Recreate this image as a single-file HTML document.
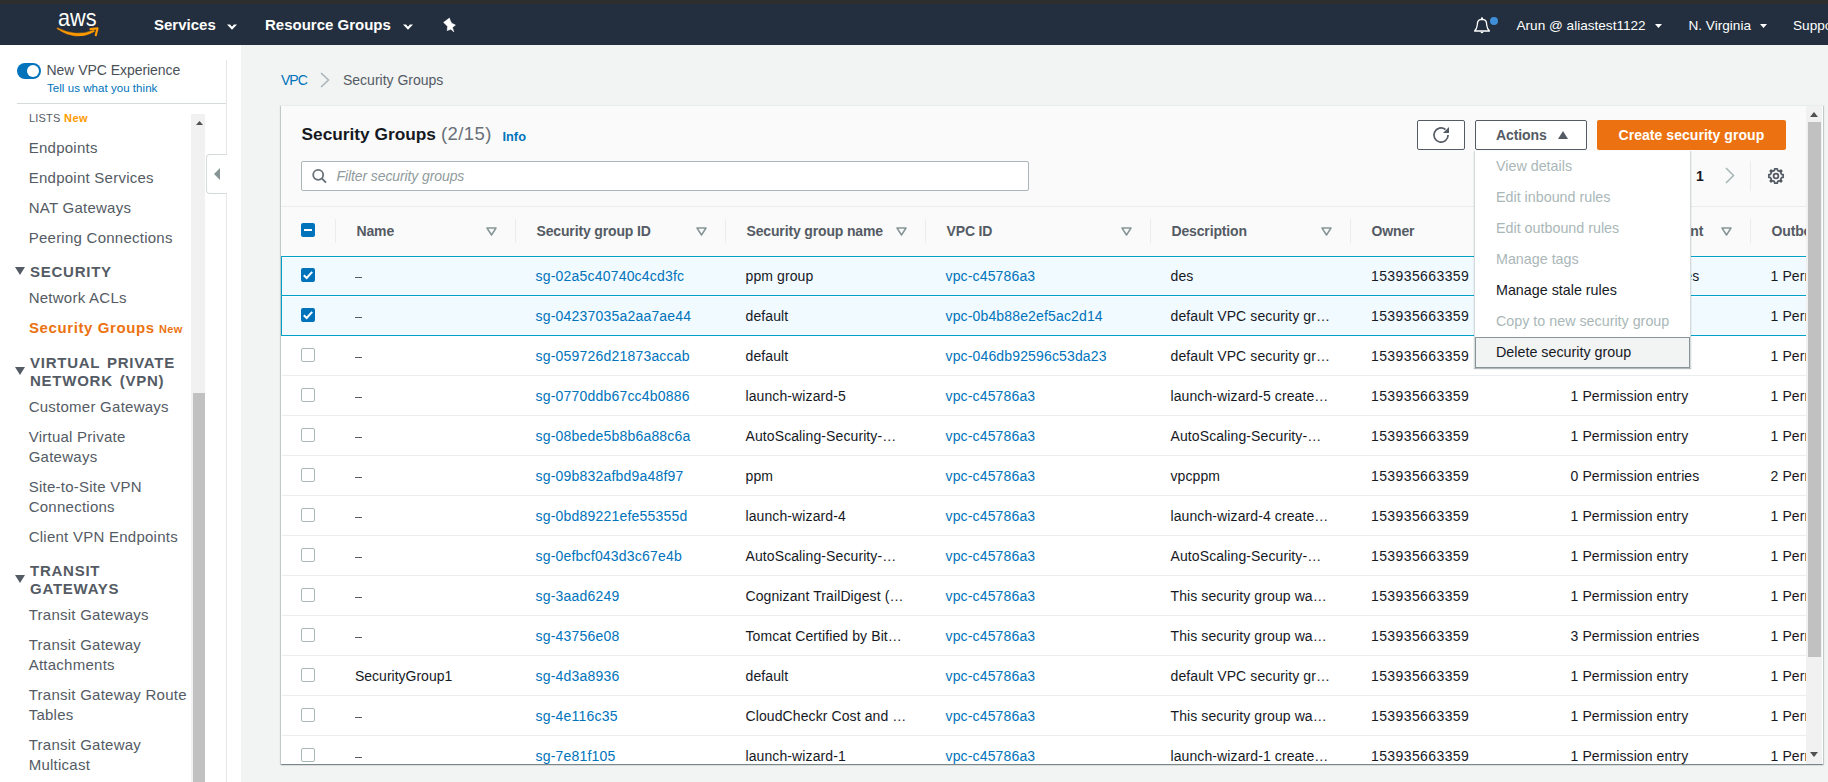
<!DOCTYPE html><html><head><meta charset="utf-8"><style>
*{box-sizing:border-box;margin:0;padding:0}
html,body{width:1828px;height:782px;overflow:hidden;background:#f2f3f3;font-family:"Liberation Sans",sans-serif;}
.t{position:absolute;line-height:1;white-space:nowrap}
.r{position:absolute}
svg{position:absolute;overflow:visible}
</style></head><body>
<div class="r" style="left:0px;top:0px;width:1828px;height:4px;background:#2e2e2e"></div>
<div class="r" style="left:0px;top:4px;width:1828px;height:41px;background:#232f3e"></div>
<svg style="left:0;top:0" width="120" height="45" viewBox="0 0 120 45">
<text x="58" y="25.5" font-family="Liberation Sans" font-size="24" fill="#fff" textLength="38.5" lengthAdjust="spacingAndGlyphs">aws</text>
<path d="M56.8 28.6 Q76 42 94.5 31.4 L93.8 30.2 Q76 37.5 57.6 27.9 Z" fill="#ff9900" stroke="#ff9900" stroke-width="0.5" stroke-linejoin="round"/>
<path d="M90.5 29.2 L97.5 28.3 L95.8 35.2" stroke="#ff9900" stroke-width="2.2" fill="none" stroke-linecap="round" stroke-linejoin="round"/>
</svg>
<div class="t" style="left:154px;top:17.30px;font-size:15px;color:#fff;font-weight:bold;">Services</div>
<div class="t" style="left:265px;top:17.30px;font-size:15px;color:#fff;font-weight:bold;">Resource Groups</div>
<svg style="left:227px;top:23.5px" width="10" height="7" viewBox="0 0 10 7"><path d="M0 0.6 L3.1 0.6 L5 2.7 L6.9 0.6 L10 0.6 L5 5.8 Z" fill="#fff"/></svg>
<svg style="left:403px;top:23.5px" width="10" height="7" viewBox="0 0 10 7"><path d="M0 0.6 L3.1 0.6 L5 2.7 L6.9 0.6 L10 0.6 L5 5.8 Z" fill="#fff"/></svg>
<svg style="left:436px;top:12px" width="26" height="26" viewBox="0 0 26 26">
<path d="M7.6 10.4 L13.4 6.1 L14.2 8.4 L15.6 11.2 L19.4 13.1 L16.4 15.4 L17.8 19.8 L14.8 17.2 L11.2 18.6 L11.6 14.4 L9.8 12.4 Z" fill="#fff" stroke="#fff" stroke-width="0.6" stroke-linejoin="round"/>
</svg>
<svg style="left:1472px;top:16px" width="28" height="20" viewBox="0 0 28 20">
<path d="M2.6 15 Q4.9 12.6 5.3 9 L5.5 6.8 Q5.9 3.4 10 3.3 Q14.1 3.4 14.5 6.8 L14.7 9 Q15.1 12.6 17.4 15 Z" stroke="#fff" stroke-width="1.3" fill="none" stroke-linejoin="round"/>
<circle cx="10" cy="2.3" r="1.1" fill="#fff"/>
<path d="M8.3 15.8 Q10 18.8 11.7 15.8 Z" fill="#fff"/>
<circle cx="22" cy="5" r="4" fill="#3f8ed8"/>
</svg>
<div class="t" style="left:1516.5px;top:19.49px;font-size:13.6px;color:#fff;">Arun @ aliastest1122</div>
<svg style="left:1655px;top:24px" width="7" height="4" viewBox="0 0 7 4"><path d="M0 0 L7 0 L3.5 4 Z" fill="#fff"/></svg>
<div class="t" style="left:1688.5px;top:19.49px;font-size:13.6px;color:#fff;">N. Virginia</div>
<svg style="left:1760px;top:24px" width="7" height="4" viewBox="0 0 7 4"><path d="M0 0 L7 0 L3.5 4 Z" fill="#fff"/></svg>
<div class="t" style="left:1793px;top:19.49px;font-size:13.6px;color:#fff;">Support</div>
<div class="r" style="left:0px;top:45px;width:241px;height:737px;background:#fff"></div>
<div class="r" style="left:226px;top:60px;width:1px;height:722px;background:#e5e8e8"></div>
<div class="r" style="left:17px;top:103px;width:209px;height:1px;background:#d5dbdb"></div>
<div class="r" style="left:17px;top:63px;width:24px;height:16px;background:#0073bb;border-radius:8px"></div>
<div class="r" style="left:27px;top:65px;width:12px;height:12px;background:#fff;border-radius:6px"></div>
<div class="t" style="left:46.5px;top:63.15px;font-size:14px;color:#4a5058;letter-spacing:-0.05px">New VPC Experience</div>
<div class="t" style="left:47px;top:82.87px;font-size:11.5px;color:#0073bb;letter-spacing:0.05px">Tell us what you think</div>
<div class="r" style="left:0;top:104px;width:226px;height:678px;overflow:hidden">
<div class="t" style="left:29px;top:8.69px;font-size:11px;color:#545b64;letter-spacing:0.2px">LISTS</div>
<div class="t" style="left:64px;top:8.69px;font-size:11px;color:#ff9900;font-weight:bold;letter-spacing:0.5px">New</div>
<div class="t" style="left:28.7px;top:36.30px;font-size:15px;color:#545b64;letter-spacing:0.25px">Endpoints</div>
<div class="t" style="left:28.7px;top:66.30px;font-size:15px;color:#545b64;letter-spacing:0.25px">Endpoint Services</div>
<div class="t" style="left:28.7px;top:95.90px;font-size:15px;color:#545b64;letter-spacing:0.25px">NAT Gateways</div>
<div class="t" style="left:28.7px;top:125.70px;font-size:15px;color:#545b64;letter-spacing:0.25px">Peering Connections</div>
<div class="t" style="left:28.7px;top:186.10px;font-size:15px;color:#545b64;letter-spacing:0.25px">Network ACLs</div>
<div class="t" style="left:28.7px;top:295.00px;font-size:15px;color:#545b64;letter-spacing:0.25px">Customer Gateways</div>
<div class="t" style="left:28.7px;top:325.30px;font-size:15px;color:#545b64;letter-spacing:0.25px">Virtual Private</div>
<div class="t" style="left:28.7px;top:344.90px;font-size:15px;color:#545b64;letter-spacing:0.25px">Gateways</div>
<div class="t" style="left:28.7px;top:375.10px;font-size:15px;color:#545b64;letter-spacing:0.25px">Site-to-Site VPN</div>
<div class="t" style="left:28.7px;top:394.80px;font-size:15px;color:#545b64;letter-spacing:0.25px">Connections</div>
<div class="t" style="left:28.7px;top:425.00px;font-size:15px;color:#545b64;letter-spacing:0.25px">Client VPN Endpoints</div>
<div class="t" style="left:28.7px;top:503.20px;font-size:15px;color:#545b64;letter-spacing:0.25px">Transit Gateways</div>
<div class="t" style="left:28.7px;top:533.10px;font-size:15px;color:#545b64;letter-spacing:0.25px">Transit Gateway</div>
<div class="t" style="left:28.7px;top:553.10px;font-size:15px;color:#545b64;letter-spacing:0.25px">Attachments</div>
<div class="t" style="left:28.7px;top:583.00px;font-size:15px;color:#545b64;letter-spacing:0.25px">Transit Gateway Route</div>
<div class="t" style="left:28.7px;top:603.00px;font-size:15px;color:#545b64;letter-spacing:0.25px">Tables</div>
<div class="t" style="left:28.7px;top:632.90px;font-size:15px;color:#545b64;letter-spacing:0.25px">Transit Gateway</div>
<div class="t" style="left:28.7px;top:652.90px;font-size:15px;color:#545b64;letter-spacing:0.25px">Multicast</div>
<div class="t" style="left:29px;top:216.30px;font-size:15px;color:#ec7211;font-weight:bold;letter-spacing:0.6px">Security Groups</div>
<div class="t" style="left:159px;top:219.69px;font-size:11px;color:#ec7211;font-weight:bold;letter-spacing:0.3px">New</div>
<div class="t" style="left:30px;top:160.30px;font-size:15px;color:#545b64;font-weight:bold;letter-spacing:0.75px;word-spacing:2px">SECURITY</div>
<svg style="left:15px;top:163px" width="10" height="8" viewBox="0 0 10 8"><path d="M0 0 L10 0 L5 8 Z" fill="#545b64"/></svg>
<div class="t" style="left:30px;top:250.70px;font-size:15px;color:#545b64;font-weight:bold;letter-spacing:0.75px;word-spacing:2px">VIRTUAL PRIVATE</div>
<svg style="left:15px;top:263px" width="10" height="8" viewBox="0 0 10 8"><path d="M0 0 L10 0 L5 8 Z" fill="#545b64"/></svg>
<div class="t" style="left:30px;top:268.60px;font-size:15px;color:#545b64;font-weight:bold;letter-spacing:0.75px;word-spacing:2px">NETWORK (VPN)</div>
<div class="t" style="left:30px;top:459.30px;font-size:15px;color:#545b64;font-weight:bold;letter-spacing:0.75px;word-spacing:2px">TRANSIT</div>
<svg style="left:15px;top:471px" width="10" height="8" viewBox="0 0 10 8"><path d="M0 0 L10 0 L5 8 Z" fill="#545b64"/></svg>
<div class="t" style="left:30px;top:476.80px;font-size:15px;color:#545b64;font-weight:bold;letter-spacing:0.75px;word-spacing:2px">GATEWAYS</div>
</div>
<div class="r" style="left:191px;top:114px;width:14px;height:668px;background:#f1f1f1"></div>
<svg style="left:196px;top:121px" width="7" height="4" viewBox="0 0 7 4"><path d="M0 4 L7 4 L3.5 0 Z" fill="#505050"/></svg>
<div class="r" style="left:193px;top:393px;width:12px;height:389px;background:#c1c1c1"></div>
<div class="r" style="left:206px;top:154px;width:21px;height:40px;background:#fff;border:1px solid #d5dbdb;border-right:none;border-radius:4px 0 0 4px"></div>
<svg style="left:213px;top:167px" width="8" height="14" viewBox="0 0 8 14"><path d="M7 1 L7 13 L1 7 Z" fill="#879596"/></svg>
<div class="t" style="left:281px;top:73.15px;font-size:14px;color:#0073bb;letter-spacing:-1px">VPC</div>
<svg style="left:319px;top:72px" width="12" height="16" viewBox="0 0 12 16"><path d="M2 1 L9.5 8 L2 15" stroke="#aab7b8" stroke-width="1.6" fill="none"/></svg>
<div class="t" style="left:343px;top:73.15px;font-size:14px;color:#545b64;">Security Groups</div>
<div class="r" style="left:281px;top:105px;width:1542px;height:659px;background:#fff;border-top:1px solid #eaeded;box-shadow:0 1px 1px 0 rgba(0,28,36,.3),1px 1px 1px 0 rgba(0,28,36,.15),-1px 1px 1px 0 rgba(0,28,36,.15)"></div>
<div class="r" style="left:281px;top:106px;width:1525px;height:658px;overflow:hidden">
<div class="r" style="left:0px;top:0px;width:1525px;height:150px;background:#fafafa"></div>
<div class="t" style="left:20.5px;top:20.36px;font-size:17.3px;color:#16191f;font-weight:bold;">Security Groups</div>
<div class="t" style="left:160px;top:19.34px;font-size:18.5px;color:#687078;letter-spacing:0.4px">(2/15)</div>
<div class="t" style="left:221.5px;top:24.96px;font-size:12.8px;color:#0073bb;font-weight:bold;">Info</div>
<div class="r" style="left:20px;top:55px;width:728px;height:30px;background:#fff;border:1px solid #aab7b8;border-radius:2px"></div>
<svg style="left:31px;top:62px" width="16" height="16" viewBox="0 0 16 16"><circle cx="6.2" cy="6.8" r="5" stroke="#687078" stroke-width="1.8" fill="none"/><path d="M9.8 10.4 L14 14.6" stroke="#687078" stroke-width="1.9"/></svg>
<div class="t" style="left:55.5px;top:63.15px;font-size:14px;color:#8f9b9c;font-style:italic;letter-spacing:-0.1px">Filter security groups</div>
<div class="r" style="left:1136px;top:14px;width:48px;height:30px;background:#fff;border:1px solid #545b64;border-radius:2px"></div>
<svg style="left:1151px;top:20px" width="18" height="18" viewBox="0 0 18 18"><path d="M16.1 9 A7.1 7.1 0 1 1 13.4 3.5" stroke="#545b64" stroke-width="1.7" fill="none"/><path d="M11 7 L17 7 L17 1 Z" fill="#545b64"/></svg>
<div class="r" style="left:1194px;top:14px;width:112px;height:30px;background:#fff;border:1px solid #545b64;border-radius:2px"></div>
<div class="t" style="left:1215px;top:22.15px;font-size:14px;color:#545b64;font-weight:bold;letter-spacing:-0.1px">Actions</div>
<svg style="left:1277px;top:25px" width="10" height="8" viewBox="0 0 10 8"><path d="M0 8 L10 8 L5 0 Z" fill="#545b64"/></svg>
<div class="r" style="left:1316px;top:14px;width:189px;height:30px;background:#ec7211;border-radius:2px"></div>
<div class="t" style="left:1337.5px;top:22.15px;font-size:14px;color:#fff;font-weight:bold;letter-spacing:0.05px">Create security group</div>
<div class="t" style="left:1415px;top:63.15px;font-size:14px;color:#16191f;font-weight:bold;">1</div>
<svg style="left:1443px;top:61px" width="12" height="17" viewBox="0 0 12 17"><path d="M2 1 L9.5 8.5 L2 16" stroke="#aab7b8" stroke-width="1.6" fill="none"/></svg>
<div class="r" style="left:1469px;top:55px;width:1px;height:30px;background:#eaeded"></div>
<svg style="left:1487px;top:62px" width="16" height="16" viewBox="0 0 16 16"><path d="M8 0.8 L9.3 0.8 L9.7 2.6 L11.4 3.3 L12.9 2.2 L13.8 3.1 L12.7 4.6 L13.4 6.3 L15.2 6.7 L15.2 9.3 L13.4 9.7 L12.7 11.4 L13.8 12.9 L12.9 13.8 L11.4 12.7 L9.7 13.4 L9.3 15.2 L6.7 15.2 L6.3 13.4 L4.6 12.7 L3.1 13.8 L2.2 12.9 L3.3 11.4 L2.6 9.7 L0.8 9.3 L0.8 6.7 L2.6 6.3 L3.3 4.6 L2.2 3.1 L3.1 2.2 L4.6 3.3 L6.3 2.6 L6.7 0.8 Z" stroke="#545b64" stroke-width="1.7" fill="none" stroke-linejoin="round"/><circle cx="8" cy="8" r="2.4" stroke="#545b64" stroke-width="1.8" fill="none"/></svg>
<div class="r" style="left:0px;top:100px;width:1525px;height:1px;background:#eaeded"></div>
<div class="r" style="left:0px;top:101px;width:1525px;height:49px;background:#fafafa"></div>
<div class="r" style="left:20px;top:117px;width:14px;height:14px;background:#0073bb;border-radius:2px"></div>
<div class="r" style="left:23px;top:123px;width:8px;height:2px;background:#fff"></div>
<div class="r" style="left:54px;top:113px;width:1px;height:24px;background:#eaeded"></div>
<div class="t" style="left:75.5px;top:118.15px;font-size:14px;color:#545b64;font-weight:bold;letter-spacing:-0.15px">Name</div>
<svg style="left:205px;top:121px" width="11" height="9" viewBox="0 0 11 9"><path d="M1 1 L10 1 L5.5 8 Z" stroke="#879596" stroke-width="1.5" fill="none" stroke-linejoin="round"/></svg>
<div class="r" style="left:234px;top:113px;width:1px;height:24px;background:#eaeded"></div>
<div class="t" style="left:255.5px;top:118.15px;font-size:14px;color:#545b64;font-weight:bold;letter-spacing:-0.15px">Security group ID</div>
<svg style="left:415px;top:121px" width="11" height="9" viewBox="0 0 11 9"><path d="M1 1 L10 1 L5.5 8 Z" stroke="#879596" stroke-width="1.5" fill="none" stroke-linejoin="round"/></svg>
<div class="r" style="left:444px;top:113px;width:1px;height:24px;background:#eaeded"></div>
<div class="t" style="left:465.5px;top:118.15px;font-size:14px;color:#545b64;font-weight:bold;letter-spacing:-0.15px">Security group name</div>
<svg style="left:615px;top:121px" width="11" height="9" viewBox="0 0 11 9"><path d="M1 1 L10 1 L5.5 8 Z" stroke="#879596" stroke-width="1.5" fill="none" stroke-linejoin="round"/></svg>
<div class="r" style="left:644px;top:113px;width:1px;height:24px;background:#eaeded"></div>
<div class="t" style="left:665.5px;top:118.15px;font-size:14px;color:#545b64;font-weight:bold;letter-spacing:-0.15px">VPC ID</div>
<svg style="left:840px;top:121px" width="11" height="9" viewBox="0 0 11 9"><path d="M1 1 L10 1 L5.5 8 Z" stroke="#879596" stroke-width="1.5" fill="none" stroke-linejoin="round"/></svg>
<div class="r" style="left:869px;top:113px;width:1px;height:24px;background:#eaeded"></div>
<div class="t" style="left:890.5px;top:118.15px;font-size:14px;color:#545b64;font-weight:bold;letter-spacing:-0.15px">Description</div>
<svg style="left:1040px;top:121px" width="11" height="9" viewBox="0 0 11 9"><path d="M1 1 L10 1 L5.5 8 Z" stroke="#879596" stroke-width="1.5" fill="none" stroke-linejoin="round"/></svg>
<div class="r" style="left:1069px;top:113px;width:1px;height:24px;background:#eaeded"></div>
<div class="t" style="left:1090.5px;top:118.15px;font-size:14px;color:#545b64;font-weight:bold;letter-spacing:-0.15px">Owner</div>
<svg style="left:1240px;top:121px" width="11" height="9" viewBox="0 0 11 9"><path d="M1 1 L10 1 L5.5 8 Z" stroke="#879596" stroke-width="1.5" fill="none" stroke-linejoin="round"/></svg>
<div class="r" style="left:1269px;top:113px;width:1px;height:24px;background:#eaeded"></div>
<div class="t" style="left:1290.5px;top:118.15px;font-size:14px;color:#545b64;font-weight:bold;letter-spacing:-0.15px">Inbound rules count</div>
<svg style="left:1440px;top:121px" width="11" height="9" viewBox="0 0 11 9"><path d="M1 1 L10 1 L5.5 8 Z" stroke="#879596" stroke-width="1.5" fill="none" stroke-linejoin="round"/></svg>
<div class="r" style="left:1469px;top:113px;width:1px;height:24px;background:#eaeded"></div>
<div class="t" style="left:1490.5px;top:118.15px;font-size:14px;color:#545b64;font-weight:bold;letter-spacing:-0.15px">Outbound rules count</div>
<svg style="left:1640px;top:121px" width="11" height="9" viewBox="0 0 11 9"><path d="M1 1 L10 1 L5.5 8 Z" stroke="#879596" stroke-width="1.5" fill="none" stroke-linejoin="round"/></svg>
<div class="r" style="left:0px;top:150px;width:1600px;height:41px;border:1px solid #00a1c9;background:#f1faff;box-shadow:inset 0 1px 0 #fff"></div>
<div class="r" style="left:20px;top:162px;width:14px;height:14px;background:#0073bb;border-radius:2px"></div>
<svg style="left:20px;top:162px" width="14" height="14" viewBox="0 0 14 14"><path d="M2.8 7.2 L5.7 10 L11.2 3.8" stroke="#fff" stroke-width="2" fill="none"/></svg>
<div class="r" style="left:74px;top:171px;width:7px;height:1px;background:#545b64"></div>
<div class="t" style="left:254.5px;top:163.15px;font-size:14px;color:#0073bb;letter-spacing:0.2px">sg-02a5c40740c4cd3fc</div>
<div class="t" style="left:464.5px;top:163.15px;font-size:14px;color:#16191f;letter-spacing:0.1px">ppm group</div>
<div class="t" style="left:664.5px;top:163.15px;font-size:14px;color:#0073bb;letter-spacing:0.15px">vpc-c45786a3</div>
<div class="t" style="left:889.5px;top:163.15px;font-size:14px;color:#16191f;letter-spacing:0.1px">des</div>
<div class="t" style="left:1090px;top:163.15px;font-size:14px;color:#16191f;letter-spacing:0.4px">153935663359</div>
<div class="t" style="left:1289.5px;top:163.15px;font-size:14px;color:#16191f;letter-spacing:0.1px">0 Permission entries</div>
<div class="t" style="left:1489.5px;top:163.15px;font-size:14px;color:#16191f;letter-spacing:0.1px">1 Permission entry</div>
<div class="r" style="left:0px;top:189px;width:1600px;height:41px;border:1px solid #00a1c9;background:#f1faff;box-shadow:inset 0 1px 0 #fff"></div>
<div class="r" style="left:20px;top:202px;width:14px;height:14px;background:#0073bb;border-radius:2px"></div>
<svg style="left:20px;top:202px" width="14" height="14" viewBox="0 0 14 14"><path d="M2.8 7.2 L5.7 10 L11.2 3.8" stroke="#fff" stroke-width="2" fill="none"/></svg>
<div class="r" style="left:74px;top:211px;width:7px;height:1px;background:#545b64"></div>
<div class="t" style="left:254.5px;top:203.15px;font-size:14px;color:#0073bb;letter-spacing:0.2px">sg-04237035a2aa7ae44</div>
<div class="t" style="left:464.5px;top:203.15px;font-size:14px;color:#16191f;letter-spacing:0.1px">default</div>
<div class="t" style="left:664.5px;top:203.15px;font-size:14px;color:#0073bb;letter-spacing:0.15px">vpc-0b4b88e2ef5ac2d14</div>
<div class="t" style="left:889.5px;top:203.15px;font-size:14px;color:#16191f;letter-spacing:0.1px">default VPC security gr…</div>
<div class="t" style="left:1090px;top:203.15px;font-size:14px;color:#16191f;letter-spacing:0.4px">153935663359</div>
<div class="t" style="left:1289.5px;top:203.15px;font-size:14px;color:#16191f;letter-spacing:0.1px">1 Permission entry</div>
<div class="t" style="left:1489.5px;top:203.15px;font-size:14px;color:#16191f;letter-spacing:0.1px">1 Permission entry</div>
<div class="r" style="left:1px;top:269px;width:1524px;height:1px;background:#eaeded"></div>
<div class="r" style="left:20px;top:242px;width:14px;height:14px;background:#fff;border:1px solid #aab7b8;border-radius:2px"></div>
<div class="r" style="left:74px;top:251px;width:7px;height:1px;background:#545b64"></div>
<div class="t" style="left:254.5px;top:243.15px;font-size:14px;color:#0073bb;letter-spacing:0.2px">sg-059726d21873accab</div>
<div class="t" style="left:464.5px;top:243.15px;font-size:14px;color:#16191f;letter-spacing:0.1px">default</div>
<div class="t" style="left:664.5px;top:243.15px;font-size:14px;color:#0073bb;letter-spacing:0.15px">vpc-046db92596c53da23</div>
<div class="t" style="left:889.5px;top:243.15px;font-size:14px;color:#16191f;letter-spacing:0.1px">default VPC security gr…</div>
<div class="t" style="left:1090px;top:243.15px;font-size:14px;color:#16191f;letter-spacing:0.4px">153935663359</div>
<div class="t" style="left:1289.5px;top:243.15px;font-size:14px;color:#16191f;letter-spacing:0.1px">1 Permission entry</div>
<div class="t" style="left:1489.5px;top:243.15px;font-size:14px;color:#16191f;letter-spacing:0.1px">1 Permission entry</div>
<div class="r" style="left:1px;top:309px;width:1524px;height:1px;background:#eaeded"></div>
<div class="r" style="left:20px;top:282px;width:14px;height:14px;background:#fff;border:1px solid #aab7b8;border-radius:2px"></div>
<div class="r" style="left:74px;top:291px;width:7px;height:1px;background:#545b64"></div>
<div class="t" style="left:254.5px;top:283.15px;font-size:14px;color:#0073bb;letter-spacing:0.2px">sg-0770ddb67cc4b0886</div>
<div class="t" style="left:464.5px;top:283.15px;font-size:14px;color:#16191f;letter-spacing:0.1px">launch-wizard-5</div>
<div class="t" style="left:664.5px;top:283.15px;font-size:14px;color:#0073bb;letter-spacing:0.15px">vpc-c45786a3</div>
<div class="t" style="left:889.5px;top:283.15px;font-size:14px;color:#16191f;letter-spacing:0.1px">launch-wizard-5 create…</div>
<div class="t" style="left:1090px;top:283.15px;font-size:14px;color:#16191f;letter-spacing:0.4px">153935663359</div>
<div class="t" style="left:1289.5px;top:283.15px;font-size:14px;color:#16191f;letter-spacing:0.1px">1 Permission entry</div>
<div class="t" style="left:1489.5px;top:283.15px;font-size:14px;color:#16191f;letter-spacing:0.1px">1 Permission entry</div>
<div class="r" style="left:1px;top:349px;width:1524px;height:1px;background:#eaeded"></div>
<div class="r" style="left:20px;top:322px;width:14px;height:14px;background:#fff;border:1px solid #aab7b8;border-radius:2px"></div>
<div class="r" style="left:74px;top:331px;width:7px;height:1px;background:#545b64"></div>
<div class="t" style="left:254.5px;top:323.15px;font-size:14px;color:#0073bb;letter-spacing:0.2px">sg-08bede5b8b6a88c6a</div>
<div class="t" style="left:464.5px;top:323.15px;font-size:14px;color:#16191f;letter-spacing:0.1px">AutoScaling-Security-…</div>
<div class="t" style="left:664.5px;top:323.15px;font-size:14px;color:#0073bb;letter-spacing:0.15px">vpc-c45786a3</div>
<div class="t" style="left:889.5px;top:323.15px;font-size:14px;color:#16191f;letter-spacing:0.1px">AutoScaling-Security-…</div>
<div class="t" style="left:1090px;top:323.15px;font-size:14px;color:#16191f;letter-spacing:0.4px">153935663359</div>
<div class="t" style="left:1289.5px;top:323.15px;font-size:14px;color:#16191f;letter-spacing:0.1px">1 Permission entry</div>
<div class="t" style="left:1489.5px;top:323.15px;font-size:14px;color:#16191f;letter-spacing:0.1px">1 Permission entry</div>
<div class="r" style="left:1px;top:389px;width:1524px;height:1px;background:#eaeded"></div>
<div class="r" style="left:20px;top:362px;width:14px;height:14px;background:#fff;border:1px solid #aab7b8;border-radius:2px"></div>
<div class="r" style="left:74px;top:371px;width:7px;height:1px;background:#545b64"></div>
<div class="t" style="left:254.5px;top:363.15px;font-size:14px;color:#0073bb;letter-spacing:0.2px">sg-09b832afbd9a48f97</div>
<div class="t" style="left:464.5px;top:363.15px;font-size:14px;color:#16191f;letter-spacing:0.1px">ppm</div>
<div class="t" style="left:664.5px;top:363.15px;font-size:14px;color:#0073bb;letter-spacing:0.15px">vpc-c45786a3</div>
<div class="t" style="left:889.5px;top:363.15px;font-size:14px;color:#16191f;letter-spacing:0.1px">vpcppm</div>
<div class="t" style="left:1090px;top:363.15px;font-size:14px;color:#16191f;letter-spacing:0.4px">153935663359</div>
<div class="t" style="left:1289.5px;top:363.15px;font-size:14px;color:#16191f;letter-spacing:0.1px">0 Permission entries</div>
<div class="t" style="left:1489.5px;top:363.15px;font-size:14px;color:#16191f;letter-spacing:0.1px">2 Permission entries</div>
<div class="r" style="left:1px;top:429px;width:1524px;height:1px;background:#eaeded"></div>
<div class="r" style="left:20px;top:402px;width:14px;height:14px;background:#fff;border:1px solid #aab7b8;border-radius:2px"></div>
<div class="r" style="left:74px;top:411px;width:7px;height:1px;background:#545b64"></div>
<div class="t" style="left:254.5px;top:403.15px;font-size:14px;color:#0073bb;letter-spacing:0.2px">sg-0bd89221efe55355d</div>
<div class="t" style="left:464.5px;top:403.15px;font-size:14px;color:#16191f;letter-spacing:0.1px">launch-wizard-4</div>
<div class="t" style="left:664.5px;top:403.15px;font-size:14px;color:#0073bb;letter-spacing:0.15px">vpc-c45786a3</div>
<div class="t" style="left:889.5px;top:403.15px;font-size:14px;color:#16191f;letter-spacing:0.1px">launch-wizard-4 create…</div>
<div class="t" style="left:1090px;top:403.15px;font-size:14px;color:#16191f;letter-spacing:0.4px">153935663359</div>
<div class="t" style="left:1289.5px;top:403.15px;font-size:14px;color:#16191f;letter-spacing:0.1px">1 Permission entry</div>
<div class="t" style="left:1489.5px;top:403.15px;font-size:14px;color:#16191f;letter-spacing:0.1px">1 Permission entry</div>
<div class="r" style="left:1px;top:469px;width:1524px;height:1px;background:#eaeded"></div>
<div class="r" style="left:20px;top:442px;width:14px;height:14px;background:#fff;border:1px solid #aab7b8;border-radius:2px"></div>
<div class="r" style="left:74px;top:451px;width:7px;height:1px;background:#545b64"></div>
<div class="t" style="left:254.5px;top:443.15px;font-size:14px;color:#0073bb;letter-spacing:0.2px">sg-0efbcf043d3c67e4b</div>
<div class="t" style="left:464.5px;top:443.15px;font-size:14px;color:#16191f;letter-spacing:0.1px">AutoScaling-Security-…</div>
<div class="t" style="left:664.5px;top:443.15px;font-size:14px;color:#0073bb;letter-spacing:0.15px">vpc-c45786a3</div>
<div class="t" style="left:889.5px;top:443.15px;font-size:14px;color:#16191f;letter-spacing:0.1px">AutoScaling-Security-…</div>
<div class="t" style="left:1090px;top:443.15px;font-size:14px;color:#16191f;letter-spacing:0.4px">153935663359</div>
<div class="t" style="left:1289.5px;top:443.15px;font-size:14px;color:#16191f;letter-spacing:0.1px">1 Permission entry</div>
<div class="t" style="left:1489.5px;top:443.15px;font-size:14px;color:#16191f;letter-spacing:0.1px">1 Permission entry</div>
<div class="r" style="left:1px;top:509px;width:1524px;height:1px;background:#eaeded"></div>
<div class="r" style="left:20px;top:482px;width:14px;height:14px;background:#fff;border:1px solid #aab7b8;border-radius:2px"></div>
<div class="r" style="left:74px;top:491px;width:7px;height:1px;background:#545b64"></div>
<div class="t" style="left:254.5px;top:483.15px;font-size:14px;color:#0073bb;letter-spacing:0.2px">sg-3aad6249</div>
<div class="t" style="left:464.5px;top:483.15px;font-size:14px;color:#16191f;letter-spacing:0.1px">Cognizant TrailDigest (…</div>
<div class="t" style="left:664.5px;top:483.15px;font-size:14px;color:#0073bb;letter-spacing:0.15px">vpc-c45786a3</div>
<div class="t" style="left:889.5px;top:483.15px;font-size:14px;color:#16191f;letter-spacing:0.1px">This security group wa…</div>
<div class="t" style="left:1090px;top:483.15px;font-size:14px;color:#16191f;letter-spacing:0.4px">153935663359</div>
<div class="t" style="left:1289.5px;top:483.15px;font-size:14px;color:#16191f;letter-spacing:0.1px">1 Permission entry</div>
<div class="t" style="left:1489.5px;top:483.15px;font-size:14px;color:#16191f;letter-spacing:0.1px">1 Permission entry</div>
<div class="r" style="left:1px;top:549px;width:1524px;height:1px;background:#eaeded"></div>
<div class="r" style="left:20px;top:522px;width:14px;height:14px;background:#fff;border:1px solid #aab7b8;border-radius:2px"></div>
<div class="r" style="left:74px;top:531px;width:7px;height:1px;background:#545b64"></div>
<div class="t" style="left:254.5px;top:523.15px;font-size:14px;color:#0073bb;letter-spacing:0.2px">sg-43756e08</div>
<div class="t" style="left:464.5px;top:523.15px;font-size:14px;color:#16191f;letter-spacing:0.1px">Tomcat Certified by Bit…</div>
<div class="t" style="left:664.5px;top:523.15px;font-size:14px;color:#0073bb;letter-spacing:0.15px">vpc-c45786a3</div>
<div class="t" style="left:889.5px;top:523.15px;font-size:14px;color:#16191f;letter-spacing:0.1px">This security group wa…</div>
<div class="t" style="left:1090px;top:523.15px;font-size:14px;color:#16191f;letter-spacing:0.4px">153935663359</div>
<div class="t" style="left:1289.5px;top:523.15px;font-size:14px;color:#16191f;letter-spacing:0.1px">3 Permission entries</div>
<div class="t" style="left:1489.5px;top:523.15px;font-size:14px;color:#16191f;letter-spacing:0.1px">1 Permission entry</div>
<div class="r" style="left:1px;top:589px;width:1524px;height:1px;background:#eaeded"></div>
<div class="r" style="left:20px;top:562px;width:14px;height:14px;background:#fff;border:1px solid #aab7b8;border-radius:2px"></div>
<div class="t" style="left:74px;top:563.15px;font-size:14px;color:#16191f;">SecurityGroup1</div>
<div class="t" style="left:254.5px;top:563.15px;font-size:14px;color:#0073bb;letter-spacing:0.2px">sg-4d3a8936</div>
<div class="t" style="left:464.5px;top:563.15px;font-size:14px;color:#16191f;letter-spacing:0.1px">default</div>
<div class="t" style="left:664.5px;top:563.15px;font-size:14px;color:#0073bb;letter-spacing:0.15px">vpc-c45786a3</div>
<div class="t" style="left:889.5px;top:563.15px;font-size:14px;color:#16191f;letter-spacing:0.1px">default VPC security gr…</div>
<div class="t" style="left:1090px;top:563.15px;font-size:14px;color:#16191f;letter-spacing:0.4px">153935663359</div>
<div class="t" style="left:1289.5px;top:563.15px;font-size:14px;color:#16191f;letter-spacing:0.1px">1 Permission entry</div>
<div class="t" style="left:1489.5px;top:563.15px;font-size:14px;color:#16191f;letter-spacing:0.1px">1 Permission entry</div>
<div class="r" style="left:1px;top:629px;width:1524px;height:1px;background:#eaeded"></div>
<div class="r" style="left:20px;top:602px;width:14px;height:14px;background:#fff;border:1px solid #aab7b8;border-radius:2px"></div>
<div class="r" style="left:74px;top:611px;width:7px;height:1px;background:#545b64"></div>
<div class="t" style="left:254.5px;top:603.15px;font-size:14px;color:#0073bb;letter-spacing:0.2px">sg-4e116c35</div>
<div class="t" style="left:464.5px;top:603.15px;font-size:14px;color:#16191f;letter-spacing:0.1px">CloudCheckr Cost and …</div>
<div class="t" style="left:664.5px;top:603.15px;font-size:14px;color:#0073bb;letter-spacing:0.15px">vpc-c45786a3</div>
<div class="t" style="left:889.5px;top:603.15px;font-size:14px;color:#16191f;letter-spacing:0.1px">This security group wa…</div>
<div class="t" style="left:1090px;top:603.15px;font-size:14px;color:#16191f;letter-spacing:0.4px">153935663359</div>
<div class="t" style="left:1289.5px;top:603.15px;font-size:14px;color:#16191f;letter-spacing:0.1px">1 Permission entry</div>
<div class="t" style="left:1489.5px;top:603.15px;font-size:14px;color:#16191f;letter-spacing:0.1px">1 Permission entry</div>
<div class="r" style="left:1px;top:669px;width:1524px;height:1px;background:#eaeded"></div>
<div class="r" style="left:20px;top:642px;width:14px;height:14px;background:#fff;border:1px solid #aab7b8;border-radius:2px"></div>
<div class="r" style="left:74px;top:651px;width:7px;height:1px;background:#545b64"></div>
<div class="t" style="left:254.5px;top:643.15px;font-size:14px;color:#0073bb;letter-spacing:0.2px">sg-7e81f105</div>
<div class="t" style="left:464.5px;top:643.15px;font-size:14px;color:#16191f;letter-spacing:0.1px">launch-wizard-1</div>
<div class="t" style="left:664.5px;top:643.15px;font-size:14px;color:#0073bb;letter-spacing:0.15px">vpc-c45786a3</div>
<div class="t" style="left:889.5px;top:643.15px;font-size:14px;color:#16191f;letter-spacing:0.1px">launch-wizard-1 create…</div>
<div class="t" style="left:1090px;top:643.15px;font-size:14px;color:#16191f;letter-spacing:0.4px">153935663359</div>
<div class="t" style="left:1289.5px;top:643.15px;font-size:14px;color:#16191f;letter-spacing:0.1px">1 Permission entry</div>
<div class="t" style="left:1489.5px;top:643.15px;font-size:14px;color:#16191f;letter-spacing:0.1px">1 Permission entry</div>
</div>
<div class="r" style="left:1806px;top:106px;width:16px;height:658px;background:#f1f1f1"></div>
<div class="r" style="left:1808px;top:122px;width:13px;height:535px;background:#c1c1c1"></div>
<svg style="left:1810px;top:112px" width="8" height="5" viewBox="0 0 8 5"><path d="M0 5 L8 5 L4 0 Z" fill="#505050"/></svg>
<svg style="left:1810px;top:752px" width="8" height="5" viewBox="0 0 8 5"><path d="M0 0 L8 0 L4 5 Z" fill="#505050"/></svg>
<div class="r" style="left:1474px;top:151px;width:217px;height:217px;background:#fff;border:1px solid #d5dbdb;border-top:none;box-shadow:0 1px 1px 0 rgba(0,28,36,.3)"></div>
<div class="t" style="left:1496px;top:158.90px;font-size:14.3px;color:#aab7b8;">View details</div>
<div class="t" style="left:1496px;top:189.90px;font-size:14.3px;color:#aab7b8;">Edit inbound rules</div>
<div class="t" style="left:1496px;top:220.90px;font-size:14.3px;color:#aab7b8;">Edit outbound rules</div>
<div class="t" style="left:1496px;top:251.90px;font-size:14.3px;color:#aab7b8;">Manage tags</div>
<div class="t" style="left:1496px;top:282.90px;font-size:14.3px;color:#16191f;">Manage stale rules</div>
<div class="t" style="left:1496px;top:313.90px;font-size:14.3px;color:#aab7b8;">Copy to new security group</div>
<div class="r" style="left:1475px;top:337px;width:215px;height:31px;background:#f2f3f3;border:1px solid #879596"></div>
<div class="t" style="left:1496px;top:344.90px;font-size:14.3px;color:#16191f;">Delete security group</div>
</body></html>
